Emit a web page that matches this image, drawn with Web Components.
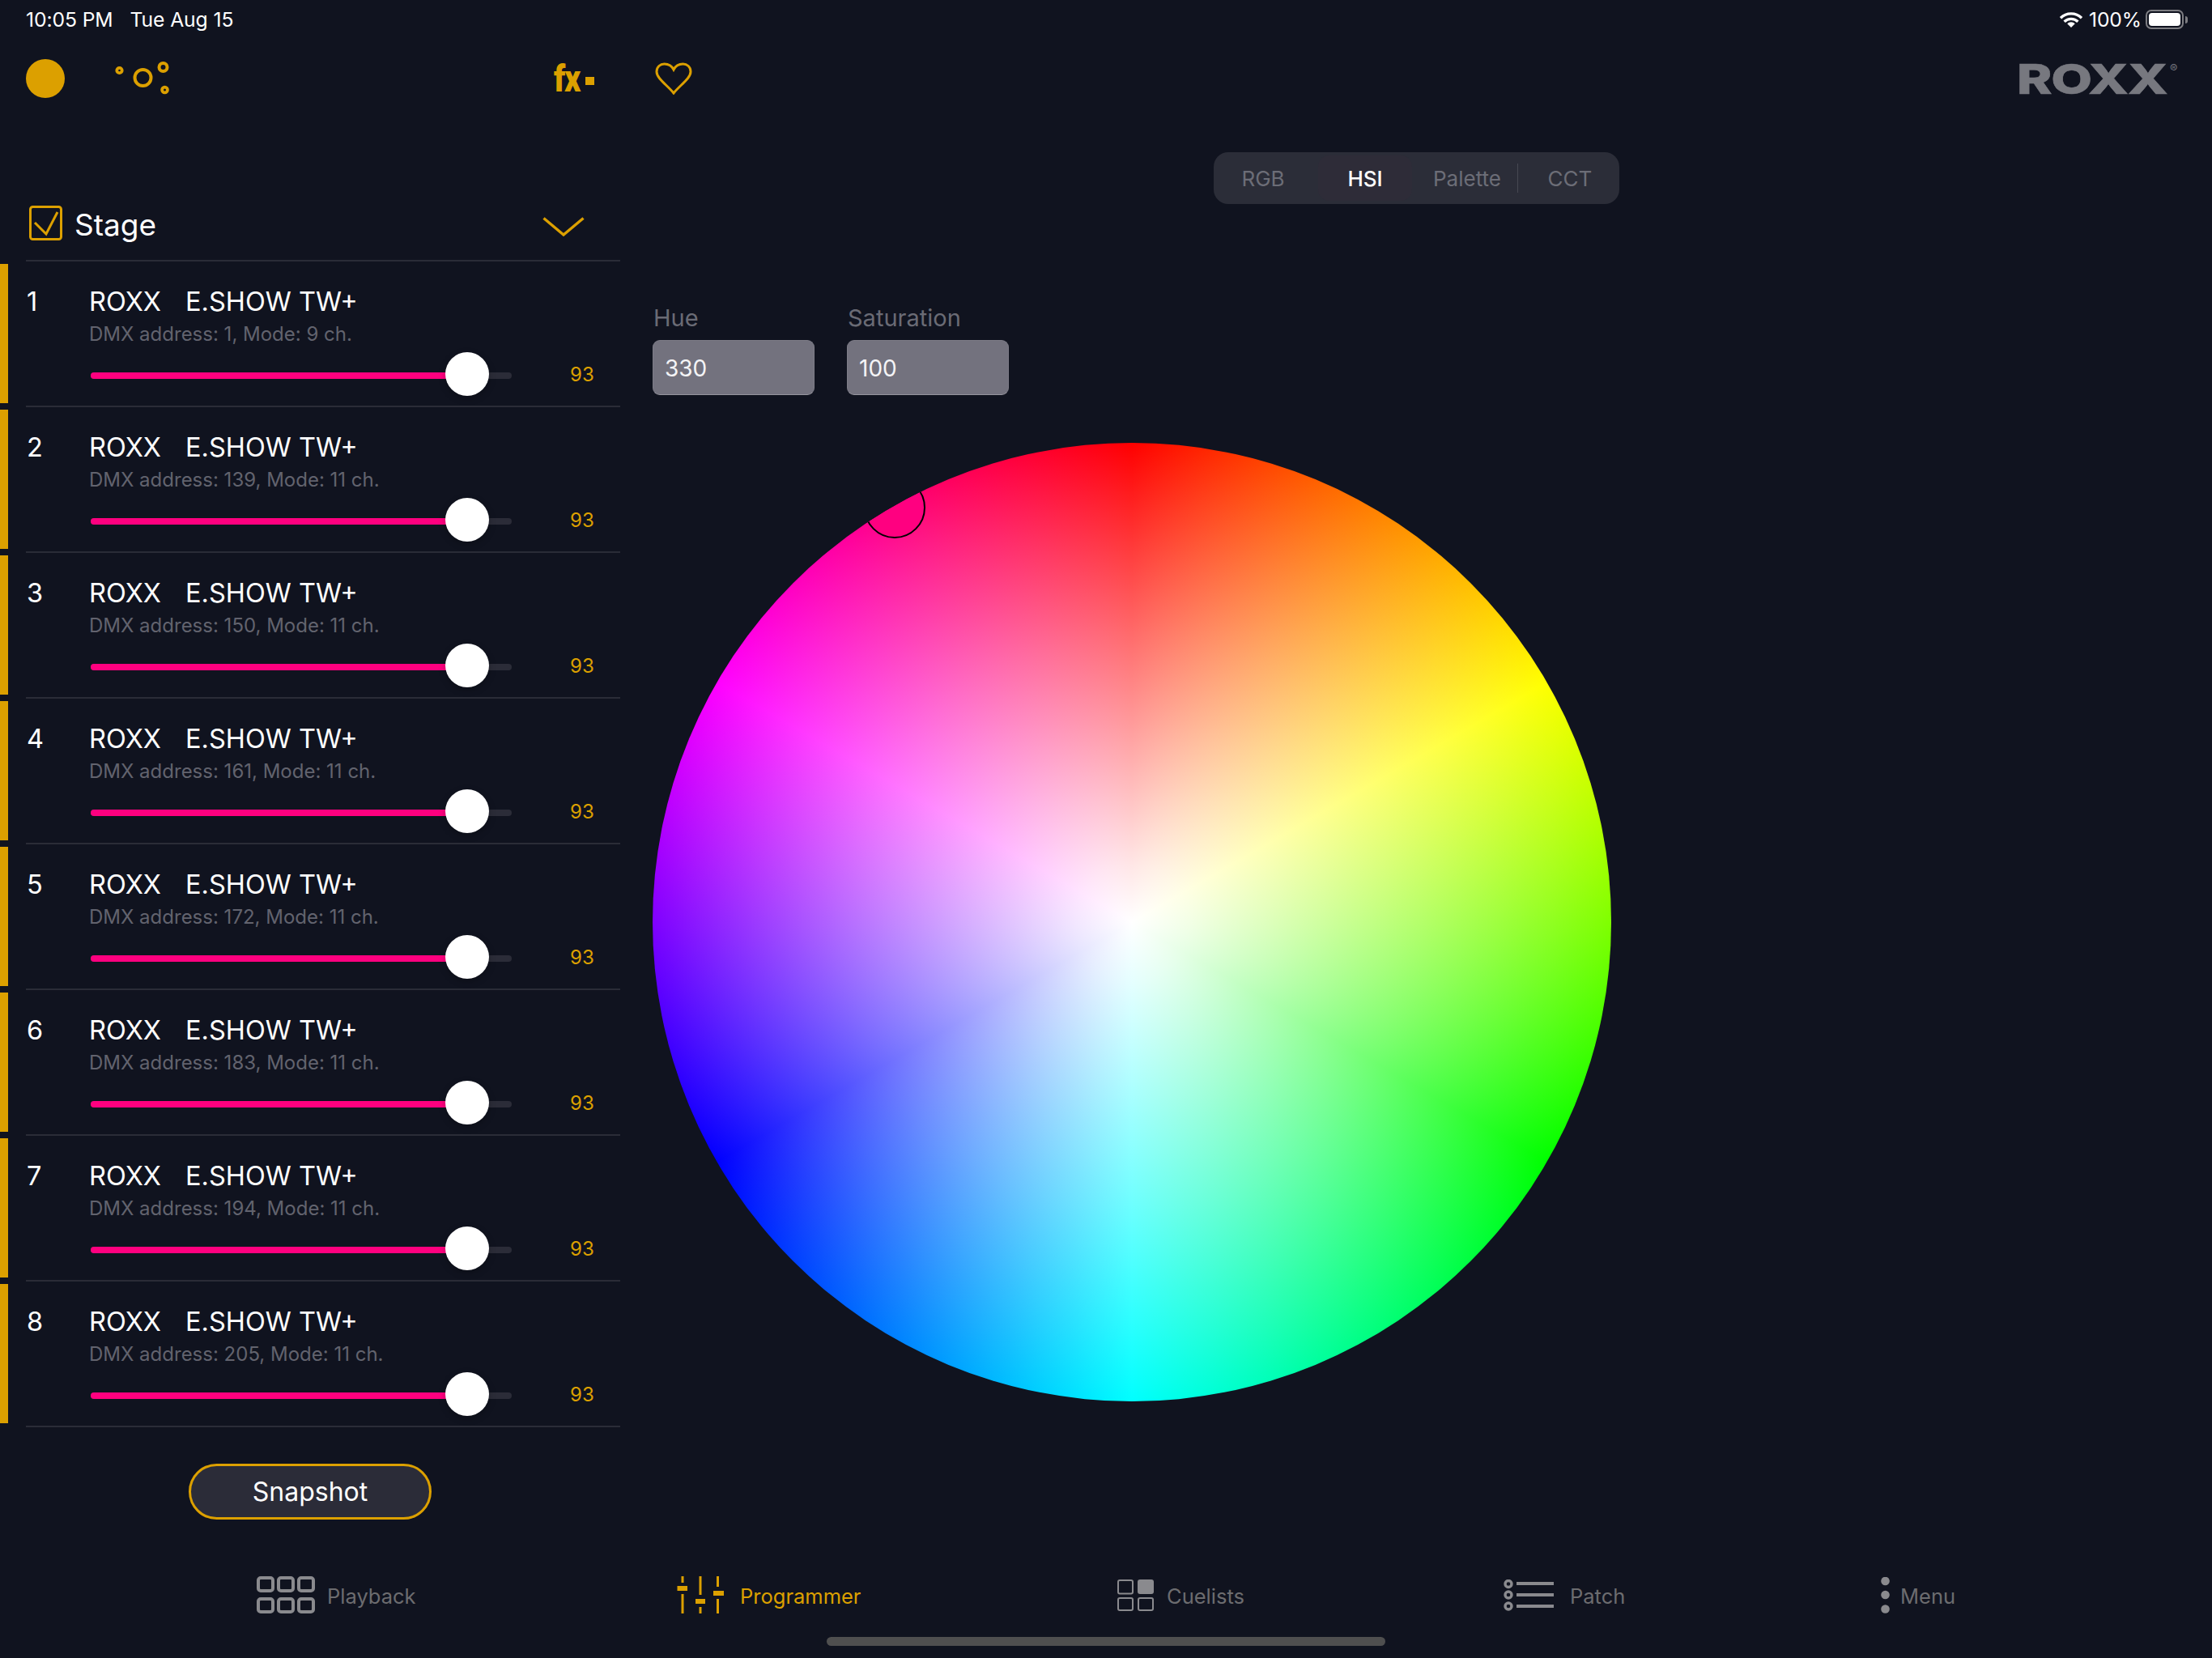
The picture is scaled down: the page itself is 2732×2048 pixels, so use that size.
<!DOCTYPE html>
<html lang="en">
<head>
<meta charset="utf-8">
<title>ROXX Programmer</title>
<style>
  html, body { margin: 0; padding: 0; background: #10131f; }
  body { width: 2732px; height: 2048px; overflow: hidden; font-family: Inter, "Noto Sans", sans-serif; color: #fff; }
  svg { display: block; }
</style>
</head>
<body>
<app-shell>
  <status-bar slot="status" time="10:05 PM" date="Tue Aug 15" battery="100%"></status-bar>
  <top-toolbar slot="toolbar"></top-toolbar>

  <fixture-panel slot="panel" title="Stage">
    <fixture-row number="1" name="ROXX" model="E.SHOW TW+" detail="DMX address: 1, Mode: 9 ch." value="93"></fixture-row>
    <fixture-row number="2" name="ROXX" model="E.SHOW TW+" detail="DMX address: 139, Mode: 11 ch." value="93"></fixture-row>
    <fixture-row number="3" name="ROXX" model="E.SHOW TW+" detail="DMX address: 150, Mode: 11 ch." value="93"></fixture-row>
    <fixture-row number="4" name="ROXX" model="E.SHOW TW+" detail="DMX address: 161, Mode: 11 ch." value="93"></fixture-row>
    <fixture-row number="5" name="ROXX" model="E.SHOW TW+" detail="DMX address: 172, Mode: 11 ch." value="93"></fixture-row>
    <fixture-row number="6" name="ROXX" model="E.SHOW TW+" detail="DMX address: 183, Mode: 11 ch." value="93"></fixture-row>
    <fixture-row number="7" name="ROXX" model="E.SHOW TW+" detail="DMX address: 194, Mode: 11 ch." value="93"></fixture-row>
    <fixture-row number="8" name="ROXX" model="E.SHOW TW+" detail="DMX address: 205, Mode: 11 ch." value="93"></fixture-row>
    <pill-button slot="footer">Snapshot</pill-button>
  </fixture-panel>

  <color-panel slot="content">
    <mode-switch></mode-switch>
    <value-fields>
      <value-field label="Hue" value="330"></value-field>
      <value-field label="Saturation" value="100"></value-field>
    </value-fields>
    <color-wheel></color-wheel>
  </color-panel>

  <tab-bar slot="tabs">
    <tab-item gap="15">
      <svg slot="icon" width="72" height="46" viewBox="0 0 72 46" fill="none" stroke="#8a8a8e" stroke-width="4">
        <rect x="2" y="2" width="18" height="16" rx="3"/><rect x="27" y="2" width="18" height="16" rx="3"/><rect x="52" y="2" width="18" height="16" rx="3"/>
        <rect x="2" y="28" width="18" height="16" rx="3"/><rect x="27" y="28" width="18" height="16" rx="3"/><rect x="52" y="28" width="18" height="16" rx="3"/>
      </svg>
      Playback
    </tab-item>
    <tab-item gap="20" active>
      <svg slot="icon" width="58" height="46" viewBox="0 0 58 46" fill="#dca000">
        <rect x="5.5" y="0" width="3" height="8"/><rect x="0.5" y="12" width="12.5" height="6"/><rect x="5.5" y="22" width="3" height="24"/>
        <rect x="27.5" y="0" width="3" height="23"/><rect x="23" y="28" width="12" height="6"/><rect x="27.5" y="38" width="3" height="8"/>
        <rect x="49" y="0" width="3" height="13"/><rect x="45" y="18" width="13" height="6"/><rect x="49" y="28" width="3" height="18"/>
      </svg>
      Programmer
    </tab-item>
    <tab-item gap="16">
      <svg slot="icon" width="45" height="39" viewBox="0 0 45 39" fill="none" stroke="#8a8a8e" stroke-width="2">
        <rect x="1" y="1" width="18" height="16.5" rx="2"/>
        <rect x="25" y="0" width="20" height="18" rx="3" fill="#8a8a8e" stroke="none"/>
        <rect x="1" y="23" width="18" height="15" rx="2"/>
        <rect x="26" y="23" width="18" height="15" rx="2"/>
      </svg>
      Cuelists
    </tab-item>
    <tab-item gap="20">
      <svg slot="icon" width="62" height="39" viewBox="0 0 62 39" fill="#8a8a8e">
        <g fill="none" stroke="#8a8a8e" stroke-width="3.4"><circle cx="6" cy="5.5" r="4"/><circle cx="6" cy="19" r="4"/><circle cx="6" cy="33" r="4"/></g>
        <rect x="16" y="3" width="46" height="4"/><rect x="16" y="17" width="46" height="4"/><rect x="16" y="31" width="46" height="4"/>
      </svg>
      Patch
    </tab-item>
    <tab-item gap="13">
      <svg slot="icon" width="11" height="45" viewBox="0 0 11 45" fill="#8a8a8e">
        <circle cx="5.5" cy="5" r="5.3"/><circle cx="5.5" cy="22" r="5.3"/><circle cx="5.5" cy="39.5" r="5.3"/>
      </svg>
      Menu
    </tab-item>
  </tab-bar>
  <home-indicator slot="home"></home-indicator>
</app-shell>

<script>
  const AMBER = '#dca000';
  function shadow(el, html) {
    const root = el.attachShadow({ mode: 'open' });
    root.innerHTML = html;
    return root;
  }
  function simple(name, html) {
    customElements.define(name, class extends HTMLElement {
      connectedCallback() { if (!this.shadowRoot) shadow(this, html); }
    });
  }

  simple('app-shell', `
    <style>
      :host { display: grid; width: 2732px; height: 2048px;
        grid-template-columns: 766px 1fr;
        grid-template-rows: 48px 98px 1794px 60px 22px 11px 15px; }
      ::slotted([slot=status]) { grid-column: 1 / -1; }
    </style>
    <slot name="status"></slot>
    <slot name="toolbar"></slot>
    <slot name="panel"></slot>
    <slot name="content"></slot>
    <slot name="tabs"></slot>
    <slot name="home"></slot>`);

  customElements.define('status-bar', class extends HTMLElement {
    connectedCallback() {
      if (this.shadowRoot) return;
      shadow(this, `
      <style>
        :host { display: flex; align-items: center; padding: 0 30px 0 32px; font-size: 24.7px; color: #fff; letter-spacing: -0.1px; }
        .date { margin-left: 21px; }
        .right { margin-left: auto; display: flex; align-items: center; }
        .pct { margin: 0 5px 0 7px; }
        .bat { position: relative; width: 47px; height: 24px; box-sizing: border-box; border: 2px solid #7d7d82; border-radius: 7px; padding: 2px; }
        .bat i { display: block; width: 100%; height: 100%; background: #fff; border-radius: 4px; }
        .tip { width: 3px; height: 9px; margin-left: 2px; background: #7d7d82; border-radius: 0 3px 3px 0; }
        svg { display: block; }
      </style>
      <span>${this.getAttribute('time')}</span><span class="date">${this.getAttribute('date')}</span>
      <div class="right">
        <svg width="30" height="21" viewBox="0 0 30 21" fill="none" stroke="#fff" stroke-width="3.4">
          <path d="M2 8.2 A18.5 18.5 0 0 1 28 8.2"/><path d="M6.6 12.8 A12 12 0 0 1 23.4 12.8"/>
          <path d="M15 20 L10.2 15.2 A6.8 6.8 0 0 1 19.8 15.2 Z" fill="#fff" stroke="none"/>
        </svg>
        <span class="pct">${this.getAttribute('battery')}</span>
        <div class="bat"><i></i></div><div class="tip"></div>
      </div>`);
    }
  });

  simple('roxx-logo', `
    <style>
      :host { display: flex; align-items: flex-start; color: #77787f; width: 199px; }
      .word { display: inline-block; font: 800 51px/37px Inter, sans-serif; letter-spacing: -1px; transform: scaleX(1.29); transform-origin: left center; width: 185px; white-space: nowrap; -webkit-text-stroke: 0.6px #77787f; }
      .r { font: 400 14px/12px Inter, sans-serif; margin-left: 4px; }
    </style>
    <span class="word">ROXX</span><span class="r">®</span>`);

  simple('top-toolbar', `
    <style>
      :host { display: flex; grid-column: 1 / -1; align-items: center; padding: 0 42px 0 32px; color: ${AMBER}; }
      .lamp { width: 48px; height: 48px; border-radius: 50%; background: ${AMBER}; flex: none; }
      .dots { margin-left: 62px; }
      .fx { margin-left: 474px; display: flex; align-items: center; width: 50px; }
      .fx b { display: block; width: 39px; font: 900 47px/42px Roboto, sans-serif; letter-spacing: -1.5px; transform: scaleX(.84); transform-origin: left center; white-space: nowrap; }
      .fx i { display: block; width: 11px; height: 10px; background: ${AMBER}; margin-top: 6px; }
      .heart { margin-left: 75px; }
      roxx-logo { margin-left: auto; }
    </style>
    <div class="lamp"></div>
    <svg class="dots" width="68" height="42" viewBox="0 0 68 42" fill="none" stroke="${AMBER}">
      <circle cx="5.5" cy="11" r="3.2" stroke-width="3.8"/>
      <circle cx="34.5" cy="20" r="10" stroke-width="4"/>
      <circle cx="59.5" cy="7" r="5" stroke-width="4"/>
      <circle cx="61.5" cy="35" r="3.4" stroke-width="3.8"/>
    </svg>
    <div class="fx"><b>fx</b><i></i></div>
    <svg class="heart" width="46" height="40" viewBox="0 0 46 40" fill="none" stroke="${AMBER}" stroke-width="3">
      <path d="M23 38 C15 28 2 20 2 11.5 C2 5.5 6.5 2 11.5 2 C16.5 2 21 5 23 9 C25 5 29.5 2 34.5 2 C39.5 2 44 5.5 44 11.5 C44 20 31 28 23 38 Z"/>
    </svg>
    <roxx-logo></roxx-logo>`);

  customElements.define('fixture-panel', class extends HTMLElement {
    connectedCallback() {
      if (this.shadowRoot) return;
      shadow(this, `
      <style>
        :host { display: flex; flex-direction: column; width: 766px; }
        .head { margin: 94px 0 0 32px; height: 83px; box-sizing: border-box; border-bottom: 2px solid #2a2c37; display: flex; align-items: flex-start; padding-top: 14px; }
        .check { margin-left: 4px; flex: none; }
        .title { font-size: 37px; line-height: 48px; margin-left: 15px; }
        .chev { margin-left: auto; margin-right: 44px; margin-top: 14px; }
        .list { display: flex; flex-direction: column; }
        .foot { display: flex; justify-content: center; margin-top: 45px; }
      </style>
      <div class="head">
        <svg class="check" width="41" height="43" viewBox="0 0 41 43" fill="none" stroke="${AMBER}" stroke-width="3">
          <rect x="1.5" y="1.5" width="38" height="40" rx="3"/><path d="M7 21 L21 35 L35 8"/>
        </svg>
        <span class="title">${this.getAttribute('title')}</span>
        <svg class="chev" width="52" height="24" viewBox="0 0 52 24" fill="none" stroke="${AMBER}" stroke-width="3.4"><path d="M1.5 1.5 L26 22 L50.5 1.5"/></svg>
      </div>
      <div class="list"><slot></slot></div>
      <div class="foot"><slot name="footer"></slot></div>`);
    }
  });

  customElements.define('fixture-row', class extends HTMLElement {
    connectedCallback() {
      if (this.shadowRoot) return;
      const a = n => this.getAttribute(n);
      shadow(this, `
      <style>
        :host { display: flex; height: 180px; }
        .bar { width: 10px; height: 172px; margin-top: 3px; background: ${AMBER}; flex: none; }
        .body { margin-left: 22px; width: 734px; box-sizing: border-box; border-bottom: 2px solid #2a2c37; padding: 30px 0 0 1px; display: grid; grid-template-columns: 77px 1fr; grid-template-rows: 40px 30px 54px; }
        .num, .name { font-size: 32.5px; line-height: 40px; white-space: pre; }
        .name span { margin-left: 30px; }
        .detail { grid-column: 2; font-size: 24px; line-height: 30px; color: #62636e; margin-top: 5px; }
        .ctl { grid-column: 2; display: flex; align-items: center; margin-top: 28px; }
        .value { font-size: 24px; color: ${AMBER}; margin-left: 72px; margin-top: -3px; }
      </style>
      <div class="bar"></div>
      <div class="body">
        <div class="num">${a('number')}</div>
        <div class="name">${a('name')}<span>${a('model')}</span></div>
        <div class="detail">${a('detail')}</div>
        <div class="ctl"><level-slider percent="89.5"></level-slider><span class="value">${a('value')}</span></div>
      </div>`);
    }
  });

  customElements.define('level-slider', class extends HTMLElement {
    connectedCallback() {
      if (this.shadowRoot) return;
      const p = this.getAttribute('percent');
      shadow(this, `
      <style>
        :host { display: block; position: relative; flex: none; width: 520px; height: 8px; margin-left: 2px; background: #2b2c38; border-radius: 4px; }
        .fill { height: 100%; width: ${p}%; background: #ff007f; border-radius: 4px; }
        .thumb { position: absolute; left: ${p}%; top: 0; width: 54px; height: 54px; margin: -25px 0 0 -27px; border-radius: 50%; background: #fff; box-shadow: 0 3px 8px rgba(0,0,0,.25); }
      </style>
      <div class="fill"></div><div class="thumb"></div>`);
    }
  });

  simple('pill-button', `
    <style>
      :host { display: flex; align-items: center; justify-content: center; width: 300px; height: 69px; box-sizing: border-box; border: 3.5px solid ${AMBER}; border-radius: 35px; background: #2b2c38; font-size: 32px; color: #fff; }
    </style><slot></slot>`);

  simple('color-panel', `
    <style>
      :host { display: flex; flex-direction: column; align-items: flex-start; padding-left: 40px; }
    </style><slot></slot>`);

  simple('mode-switch', `
    <style>
      :host { display: grid; grid-template-columns: 129px 116px 131px 1fr; align-items: center; width: 501px; height: 64px; margin: 42px 0 0 693px; background: #2b2d38; border-radius: 18px; font-size: 26px; color: #6c6d77; position: relative; }
      div { display: flex; align-items: center; justify-content: center; height: 56px; border-radius: 14px; box-sizing: border-box; }
      .rgb { padding-right: 7px; }
      .on { background: #2e2c38; color: #fff; font-weight: 500; }
      .pal { padding-left: 5px; position: relative; border-radius: 0; }
      .pal::after { content: ""; position: absolute; right: 0; top: 10px; height: 36px; width: 1px; background: #474852; }
      .cct { padding-left: 3px; }
    </style>
    <div class="rgb">RGB</div><div class="on">HSI</div><div class="pal">Palette</div><div class="cct">CCT</div>`);

  simple('value-fields', `
    <style>
      :host { display: flex; gap: 40px; margin-top: 123px; }
    </style><slot></slot>`);

  customElements.define('value-field', class extends HTMLElement {
    connectedCallback() {
      if (this.shadowRoot) return;
      shadow(this, `
      <style>
        :host { display: flex; flex-direction: column; width: 200px; }
        label { font-size: 29px; line-height: 36px; height: 45px; color: #6a6b75; padding-left: 1px; }
        .box { height: 68px; box-sizing: border-box; border-radius: 9px; background: #73727e; border: 1px solid #7d7c87; border-bottom-color: #96959e; display: flex; align-items: center; padding: 2px 0 0 14px; font-size: 28px; color: #f4f4f6; }
      </style>
      <label>${this.getAttribute('label')}</label>
      <div class="box">${this.getAttribute('value')}</div>`);
    }
  });

  simple('color-wheel', `
    <style>
      :host { display: block; position: relative; width: 1184px; height: 1184px; margin: 59px 0 0 0; border-radius: 50%; overflow: hidden;
        background: radial-gradient(circle closest-side, #fff 0, rgba(255,255,255,.9) 12%, rgba(255,255,255,.72) 30%, rgba(255,255,255,.42) 60%, rgba(255,255,255,0) 100%),
                    conic-gradient(from 0deg, #f00, #ff0, #0f0, #0ff, #00f, #f0f, #f00); }
      .sel { position: absolute; left: 261px; top: 42px; width: 76px; height: 76px; box-sizing: border-box; border: 2.5px solid #000; border-radius: 50%; background: #ff0080; }
    </style>
    <div class="sel"></div>`);

  simple('tab-bar', `
    <style>
      :host { display: grid; grid-column: 1 / -1; grid-template-columns: 519px 544px 477px 466px 1fr; align-items: center; padding-left: 317px; color: #6c6c6f; font-size: 25.5px; }
    </style><slot></slot>`);

  customElements.define('tab-item', class extends HTMLElement {
    connectedCallback() {
      if (this.shadowRoot) return;
      const gap = this.getAttribute('gap');
      shadow(this, `
      <style>
        :host { display: flex; align-items: center; gap: ${gap}px; }
        :host([active]) { color: ${AMBER}; }
        span { padding-top: 3px; }
      </style>
      <slot name="icon"></slot><span><slot></slot></span>`);
    }
  });

  simple('home-indicator', `
    <style>
      :host { display: block; grid-column: 1 / -1; grid-row: 6; width: 690px; height: 11px; margin-left: 1021px; background: #4f4f4f; border-radius: 6px; }
    </style>`);
</script>
</body>
</html>
